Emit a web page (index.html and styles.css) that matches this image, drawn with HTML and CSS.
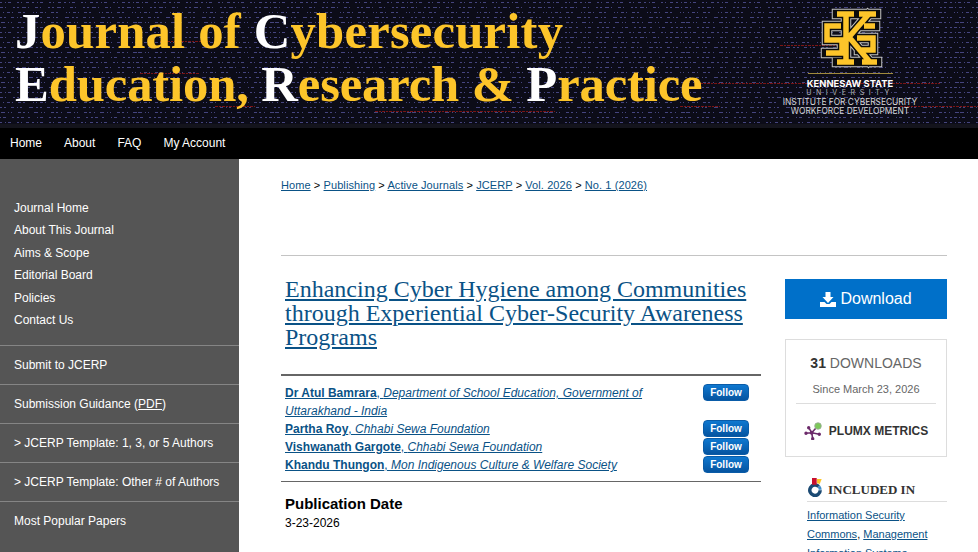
FILE: index.html
```html
<!DOCTYPE html>
<html lang="en">
<head>
  <meta charset="UTF-8">
  <title>Enhancing Cyber Hygiene among Communities through Experiential Cyber-Security Awareness Programs</title>
  <link rel="stylesheet" href="styles.css">
</head>
<body>
  <header class="banner">
    <svg class="banner-bg" width="100%" height="100%" aria-hidden="true">
      <defs>
        <pattern id="code" width="137" height="30" patternUnits="userSpaceOnUse">
          <g fill="none" stroke="#45457f" stroke-width="1">
            <path d="M0 2.5h137" stroke-dasharray="2 3 1 2 3 6 2 2 1 4 3 3"/>
            <path d="M0 7.5h137" stroke-dasharray="3 2 1 7 2 2 2 3 4 2 1 6"/>
            <path d="M3 12.5h134" stroke-dasharray="1 3 3 2 1 5 3 2 2 8 1 2"/>
            <path d="M0 17.5h137" stroke-dasharray="2 2 2 5 3 3 1 2 2 7 4 3"/>
            <path d="M1 22.5h136" stroke-dasharray="4 3 1 2 1 6 3 2 2 3 1 5"/>
            <path d="M0 27.5h137" stroke-dasharray="1 2 3 6 2 3 2 2 3 4 2 7"/>
          </g>
        </pattern>
      </defs>
      <rect width="100%" height="100%" fill="#0c0c18"/>
      <rect width="100%" height="100%" fill="url(#code)"/>
      <g stroke="#7a1414" stroke-dasharray="3 1 2 1">
        <path d="M160 41.5h50"/>
        <path d="M140 73.5h60"/>
        <path d="M215 106.5h40"/>
        <path d="M375 111.5h180"/>
        <path d="M780 45.5h60"/>
        <path d="M700 83.5h240"/>
        <path d="M680 106.5h40"/>
        <path d="M900 106.5h78"/>
      </g>
    </svg>
    <h1 class="banner-title">
      <span class="line line-one"><b>J</b>ournal of <b>C</b>ybersecurity</span>
      <span class="line line-two"><b>E</b>ducation, <b>R</b>esearch &amp; <b>P</b>ractice</span>
    </h1>
    <div class="ksu">
      <svg class="ksu-mark" width="76" height="68" viewBox="0 0 76 68" aria-hidden="true">
        <defs>
          <path id="ksPath" d="M25 10H42M47 10H64M25 58H42M50 58H65M34 10V58M56 11L37 33L57 57M29 22H15V36H30V49H14M63 22H52M45 34H61V46H47"/>
        </defs>
        <g fill="none">
          <use href="#ksPath" stroke="#c4c4c4" stroke-width="10.500" stroke-linecap="square"/>
          <use href="#ksPath" stroke="#0c0c0c" stroke-width="8.500" stroke-linecap="square"/>
          <use href="#ksPath" stroke="#fdc52a" stroke-width="5.500"/>
        </g>
      </svg>
      <div class="ksu-rule"></div>
      <div class="ksu-name">KENNESAW STATE</div>
      <div class="ksu-uni">UNIVERSITY</div>
      <div class="ksu-inst">INSTITUTE FOR CYBERSECURITY<br>WORKFORCE DEVELOPMENT</div>
    </div>
  </header>

  <nav class="topnav">
    <a href="#">Home</a>
    <a href="#">About</a>
    <a href="#">FAQ</a>
    <a href="#">My Account</a>
  </nav>

  <div class="wrap">
    <aside class="sidebar">
      <ul class="side-main">
        <li><a href="#">Journal Home</a></li>
        <li><a href="#">About This Journal</a></li>
        <li><a href="#">Aims &amp; Scope</a></li>
        <li><a href="#">Editorial Board</a></li>
        <li><a href="#">Policies</a></li>
        <li><a href="#">Contact Us</a></li>
      </ul>
      <ul class="side-extra">
        <li><a href="#">Submit to JCERP</a></li>
        <li><a href="#">Submission Guidance (<u>PDF</u>)</a></li>
        <li><a href="#">&gt; JCERP Template: 1, 3, or 5 Authors</a></li>
        <li><a href="#">&gt; JCERP Template: Other # of Authors</a></li>
        <li><a href="#">Most Popular Papers</a></li>
      </ul>
    </aside>

    <main class="content">
      <div class="crumbs">
        <a href="#">Home</a> &gt; <a href="#">Publishing</a> &gt; <a href="#">Active Journals</a> &gt;
        <a href="#">JCERP</a> &gt; <a href="#">Vol. 2026</a> &gt; <a href="#">No. 1 (2026)</a>
      </div>

      <div class="columns">
        <article class="article">
          <h2 class="title"><a href="#">Enhancing Cyber Hygiene among Communities through Experiential Cyber-Security Awareness Programs</a></h2>

          <div class="authors">
            <div class="author">
              <a class="author-name" href="#"><strong>Dr Atul Bamrara</strong>, <em>Department of School Education, Government of Uttarakhand - India</em></a>
              <button class="follow">Follow</button>
            </div>
            <div class="author">
              <a class="author-name" href="#"><strong>Partha Roy</strong>, <em>Chhabi Sewa Foundation</em></a>
              <button class="follow">Follow</button>
            </div>
            <div class="author">
              <a class="author-name" href="#"><strong>Vishwanath Gargote</strong>, <em>Chhabi Sewa Foundation</em></a>
              <button class="follow">Follow</button>
            </div>
            <div class="author">
              <a class="author-name" href="#"><strong>Khandu Thungon</strong>, <em>Mon Indigenous Culture &amp; Welfare Society</em></a>
              <button class="follow">Follow</button>
            </div>
          </div>

          <h3 class="field">Publication Date</h3>
          <p class="field-value">3-23-2026</p>
          <h3 class="field abstract">Abstract</h3>
        </article>

        <aside class="rail">
          <a class="download" href="#">
            <svg width="16" height="15" viewBox="0 0 16 15" aria-hidden="true">
              <path fill="#fff" d="M5.5 0h5v5h3L8 11 2.500 5h3zM0 10h4.500L6.500 12h3l2-2H16v5H0z"/>
            </svg>
            Download
          </a>

          <div class="stats">
            <div class="stat-count"><b>31</b> DOWNLOADS</div>
            <div class="stat-since">Since March 23, 2026</div>
            <div class="plumx">
              <svg width="18" height="19" viewBox="0 0 18 19" aria-hidden="true">
                <g stroke="#6c2a6a" stroke-width="1.6" fill="#6c2a6a">
                  <path d="M7.700 11.700L4.700 6.700M7.700 11.700L2 12.300M7.700 11.700L8.700 17.700M7.700 11.700L15.300 13.300M7.700 11.700L12 7"/>
                  <circle cx="4.700" cy="6.700" r=".9"/>
                  <circle cx="2" cy="12.300" r=".9"/>
                  <circle cx="8.700" cy="17.700" r=".9"/>
                  <circle cx="15.300" cy="13.300" r=".9"/>
                  <circle cx="7.700" cy="11.700" r="1.200"/>
                </g>
                <circle cx="14" cy="5" r="3.300" fill="#7dc95a" stroke="#9aa89a" stroke-width=".8"/>
              </svg>
              <span>PLUMX METRICS</span>
            </div>
          </div>

          <section class="included">
            <h4 class="included-head">
              <svg width="18" height="20" viewBox="0 0 18 20" aria-hidden="true">
                <path d="M11.700 9.600A5.200 5.200 0 1 0 13.200 13.300" fill="none" stroke="#1b4a73" stroke-width="3.500"/>
                <path d="M11.900 9.500A5.200 5.200 0 0 1 13.200 12.800" fill="none" stroke="#3f8fcb" stroke-width="3"/>
                <rect x="5" y="1" width="4.700" height="6.700" fill="#c8102e"/>
                <path d="M10 2h4.700l-2 5-2.700-1z" fill="#fdc52a"/>
              </svg>
              INCLUDED IN
            </h4>
            <p class="included-links"><a href="#">Information Security Commons</a>, <a href="#">Management Information Systems Commons</a></p>
          </section>
        </aside>
      </div>
    </main>
  </div>
</body>
</html>
```

FILE: styles.css
```css
html, body {
  height: 552px;
  overflow: hidden;
}
body {
  margin: 0;
  background: #fff;
  font-family: "Liberation Sans", Arial, sans-serif;
  font-size: 12px;
  color: #000;
}
a {
  color: #0a5286;
}

/* banner */
.banner {
  position: relative;
  display: flex;
  justify-content: space-between;
  height: 124px;
  border-bottom: 4px solid #14141c;
  overflow: hidden;
}
.banner-bg {
  position: absolute;
  top: 0;
  left: 0;
}
.banner-title {
  position: relative;
  margin: 0;
  padding: 5px 0 0 15px;
  font-family: "Liberation Serif", serif;
  font-size: 50.7px;
  line-height: 53px;
  font-weight: bold;
  color: #fdc52a;
  white-space: nowrap;
}
.banner-title b {
  color: #fff;
}
.line {
  display: block;
}
.line-one {
  letter-spacing: 0.2px;
}
.line-two {
  letter-spacing: -0.14px;
}
.ksu {
  position: relative;
  display: flex;
  flex-direction: column;
  align-items: center;
  width: 140px;
  margin-right: 58px;
  padding-top: 4px;
  color: #d8d8d8;
  text-align: center;
}
.ksu-rule {
  flex: none;
  width: 85px;
  height: 1px;
  margin-top: 1px;
  background: #a08a3c;
}
.ksu-name {
  margin-top: 5px;
  font-family: Inter, "Liberation Sans", sans-serif;
  font-size: 9.4px;
  line-height: 9px;
  font-weight: bold;
  color: #fff;
  white-space: nowrap;
}
.ksu-uni {
  font-family: Inter, "Liberation Sans", sans-serif;
  font-size: 7px;
  line-height: 9px;
  letter-spacing: 4.6px;
  color: #b4b4b4;
}
.ksu-inst {
  margin-top: 1px;
  font-family: Inter, "Liberation Sans", sans-serif;
  font-size: 8.4px;
  line-height: 9px;
  white-space: nowrap;
}

/* top nav */
.topnav {
  display: flex;
  gap: 22px;
  height: 31px;
  padding-left: 10px;
  background: #000;
  line-height: 30px;
}
.topnav a {
  color: #fff;
  text-decoration: none;
}

.wrap {
  display: flex;
}

/* sidebar */
.sidebar {
  flex: none;
  width: 239px;
  height: 393px;
  background: #555;
}
.sidebar ul {
  margin: 0;
  padding: 0;
  list-style: none;
}
.sidebar a {
  color: #fff;
  text-decoration: none;
}
.sidebar u {
  text-decoration: underline;
}
.sidebar .side-main {
  padding: 38px 0 14px 14px;
}
.side-main li {
  height: 22.4px;
  line-height: 22.4px;
}
.side-extra li {
  height: 39px;
  padding-left: 14px;
  border-top: 1px solid #858585;
  box-sizing: border-box;
  line-height: 39px;
}

/* main */
.content {
  flex: 1;
  min-width: 0;
  padding: 0 31px 0 42px;
}
.crumbs {
  height: 97px;
  padding-top: 20px;
  box-sizing: border-box;
  border-bottom: 1px solid #c4c4c4;
  font-size: 11px;
  line-height: 13px;
  letter-spacing: 0.09px;
}
.columns {
  display: flex;
  justify-content: space-between;
}
.article {
  width: 480px;
}
.title {
  margin: 21px 0 25px;
  padding-left: 4px;
  font-family: "Liberation Serif", serif;
  font-size: 24px;
  line-height: 24px;
  font-weight: normal;
}
.authors {
  padding: 8px 0 7px 4px;
  border-top: 2px solid #666;
  border-bottom: 1px solid #666;
}
.author {
  display: flex;
  justify-content: space-between;
  align-items: flex-start;
  padding-right: 12px;
  line-height: 18px;
}
.author-name {
  width: 395px;
}
.follow {
  flex: none;
  width: 46px;
  height: 17px;
  padding: 0;
  border: 1px solid #0a5ca8;
  border-radius: 4px;
  background: linear-gradient(#0f78d0, #0554a0);
  color: #fff;
  font-family: inherit;
  font-size: 10px;
  font-weight: bold;
  line-height: 14px;
}
.field {
  margin: 13px 0 0 4px;
  font-size: 15px;
  line-height: 18px;
  font-weight: bold;
}
.field-value {
  margin: 1px 0 0 4px;
  line-height: 18px;
}
.abstract {
  margin-top: 18px;
}

/* right rail */
.rail {
  width: 162px;
  padding-top: 23px;
}
.download {
  display: flex;
  align-items: center;
  justify-content: center;
  gap: 4px;
  height: 40px;
  background: #0070c9;
  color: #fff;
  font-size: 16px;
  text-decoration: none;
}
.stats {
  height: 118px;
  margin-top: 20px;
  padding: 0 10px;
  box-sizing: border-box;
  border: 1px solid #ddd;
  text-align: center;
}
.stat-count {
  margin-top: 15px;
  font-size: 14px;
  line-height: 16px;
  color: #666;
}
.stat-count b {
  color: #333;
}
.stat-since {
  padding: 11px 0 7px;
  border-bottom: 1px solid #ddd;
  font-size: 11px;
  line-height: 14px;
  color: #666;
}
.plumx {
  display: flex;
  align-items: center;
  justify-content: center;
  gap: 7px;
  margin-top: 17px;
  font-size: 12px;
  font-weight: bold;
  color: #333;
}
.included {
  margin: 20px 0 0 22px;
}
.included-head {
  display: flex;
  align-items: flex-end;
  gap: 3px;
  margin: 0;
  padding-bottom: 4px;
  border-bottom: 1px solid #ddd;
  font-family: "Liberation Serif", serif;
  font-size: 13px;
  line-height: 14px;
  color: #333;
}
.included-links {
  margin: 4px 0 0;
  font-size: 11px;
  line-height: 19px;
}
```
